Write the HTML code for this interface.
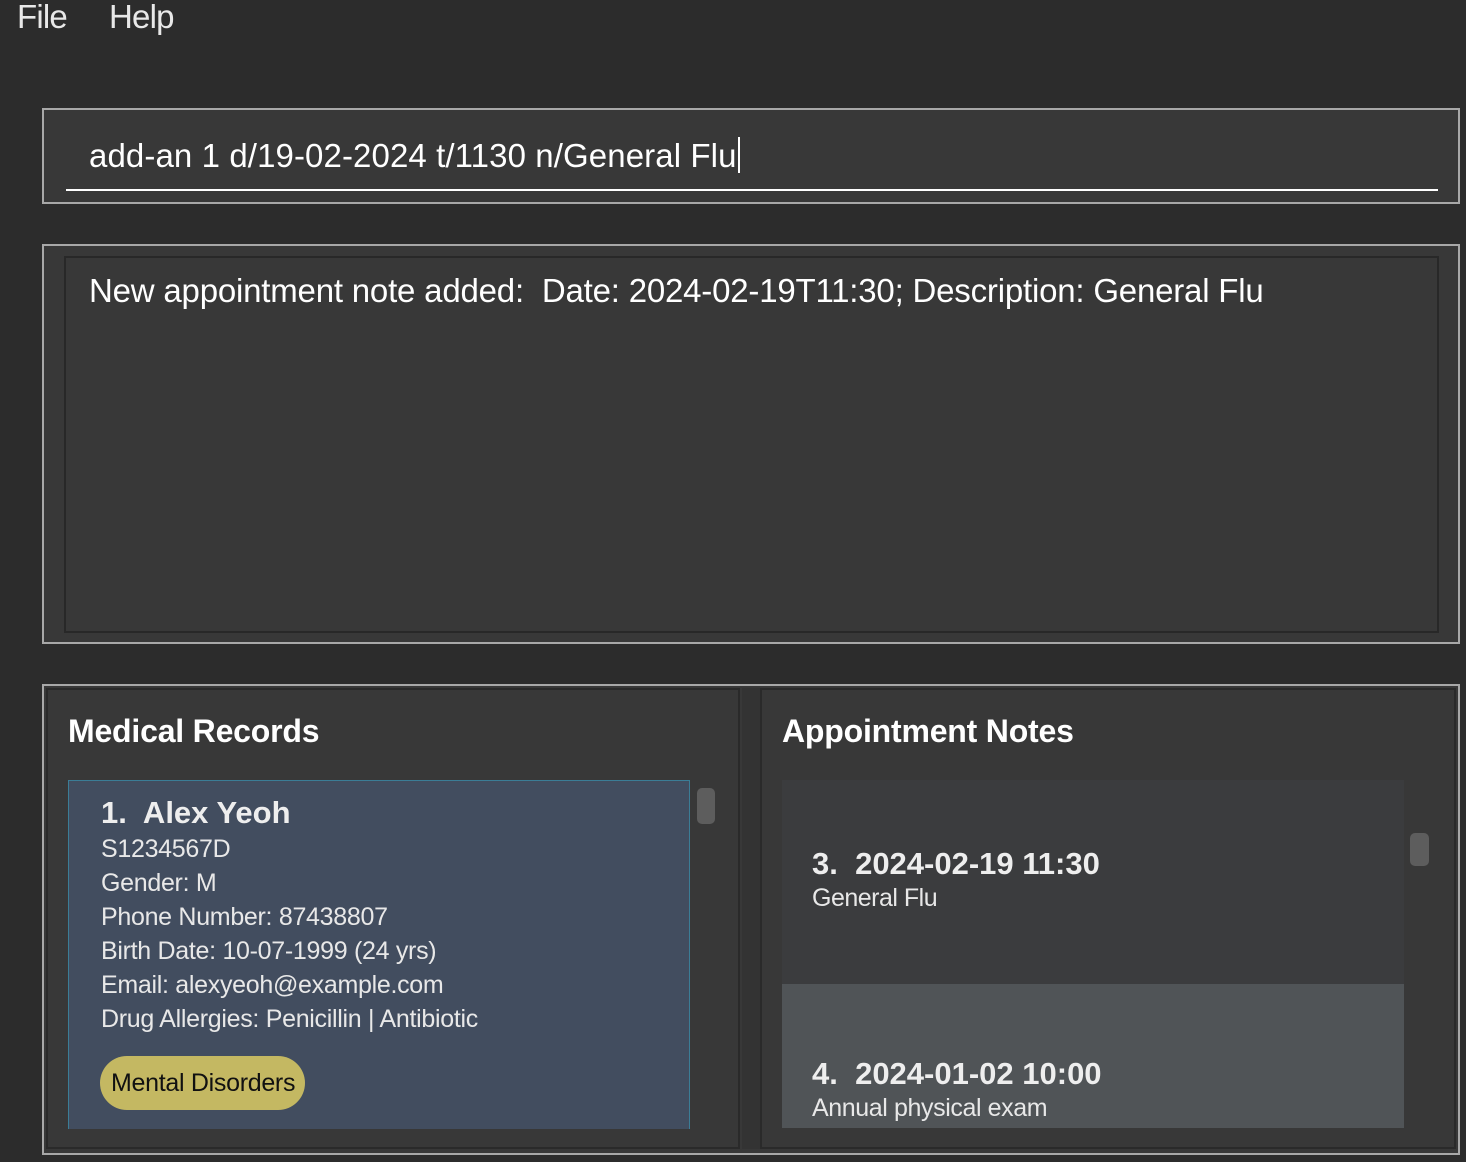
<!DOCTYPE html>
<html><head><meta charset="utf-8"><style>
body{margin:0;width:1466px;height:1162px;background:#2c2c2c;overflow:hidden;font-family:"Liberation Sans",sans-serif;color:#fff;position:relative}
.a{position:absolute;white-space:nowrap}
</style></head><body>
<div class="a" style="left:17px;top:-2px;font-size:33px;color:#e8e8e8;letter-spacing:-0.8px">File</div>
<div class="a" style="left:109px;top:-2px;font-size:33px;color:#e8e8e8;letter-spacing:-0.8px">Help</div>

<div class="a" style="left:42px;top:108px;width:1414px;height:92px;border:2px solid #a8a8a8;background:#383838"></div>
<div class="a" style="left:89px;top:137px;font-size:33px;letter-spacing:0.1px">add-an 1 d/19-02-2024 t/1130 n/General Flu<span style="display:inline-block;width:2px;height:36px;background:#fff;vertical-align:-6px;margin-left:1px"></span></div>
<div class="a" style="left:66px;top:189px;width:1372px;height:2px;background:#fff"></div>

<div class="a" style="left:42px;top:244px;width:1414px;height:396px;border:2px solid #a8a8a8;background:#383838"></div>
<div class="a" style="left:64px;top:256px;width:1371px;height:373px;border:2px solid #282828"></div>
<div class="a" style="left:89px;top:272px;font-size:33px;letter-spacing:-0.2px">New appointment note added:&nbsp; Date: 2024-02-19T11:30; Description: General Flu</div>

<div class="a" style="left:42px;top:684px;width:1414px;height:467px;border:2px solid #a8a8a8;background:#383838"></div>
<div class="a" style="left:46px;top:688px;width:694px;height:461px;border:2px solid #2a2a2a;box-sizing:border-box"></div>
<div class="a" style="left:760px;top:688px;width:696px;height:461px;border:2px solid #2a2a2a;box-sizing:border-box"></div>
<div class="a" style="left:742px;top:688px;width:18px;height:461px;background:#333"></div>

<div class="a" style="left:68px;top:713px;font-size:32px;font-weight:bold;letter-spacing:-0.2px">Medical Records</div>
<div class="a" style="left:68px;top:780px;width:620px;height:348px;background:#424d5f;border:1px solid #3b7d96;border-bottom:none"></div>
<div class="a" style="left:101px;top:795px;font-size:31px;font-weight:bold;color:#eee">1.&nbsp; Alex Yeoh</div>
<div class="a" style="left:101px;top:832px;font-size:25px;line-height:34px;color:#e8e8e8;letter-spacing:-0.3px">S1234567D<br>Gender: M<br>Phone Number: 87438807<br>Birth Date: 10-07-1999 (24 yrs)<br>Email: alexyeoh@example.com<br>Drug Allergies: Penicillin | Antibiotic</div>
<div class="a" style="left:100px;top:1056px;width:205px;height:54px;border-radius:27px;background:#c4b862"></div>
<div class="a" style="left:111px;top:1069px;font-size:25px;color:#111;letter-spacing:-0.3px">Mental Disorders</div>
<div class="a" style="left:697px;top:788px;width:18px;height:36px;border-radius:5px;background:#5d5d5d"></div>

<div class="a" style="left:782px;top:713px;font-size:32px;font-weight:bold;letter-spacing:-0.2px">Appointment Notes</div>
<div class="a" style="left:782px;top:780px;width:622px;height:204px;background:#3b3c3e"></div>
<div class="a" style="left:782px;top:984px;width:622px;height:144px;background:#505457"></div>
<div class="a" style="left:812px;top:846px;font-size:31px;font-weight:bold;color:#eee">3.&nbsp; 2024-02-19 11:30</div>
<div class="a" style="left:812px;top:884px;font-size:25px;color:#e8e8e8;letter-spacing:-0.5px">General Flu</div>
<div class="a" style="left:812px;top:1056px;font-size:31px;font-weight:bold;color:#eee">4.&nbsp; 2024-01-02 10:00</div>
<div class="a" style="left:812px;top:1094px;font-size:25px;color:#e8e8e8;letter-spacing:-0.4px">Annual physical exam</div>
<div class="a" style="left:1410px;top:833px;width:19px;height:33px;border-radius:5px;background:#5d5d5d"></div>
</body></html>
